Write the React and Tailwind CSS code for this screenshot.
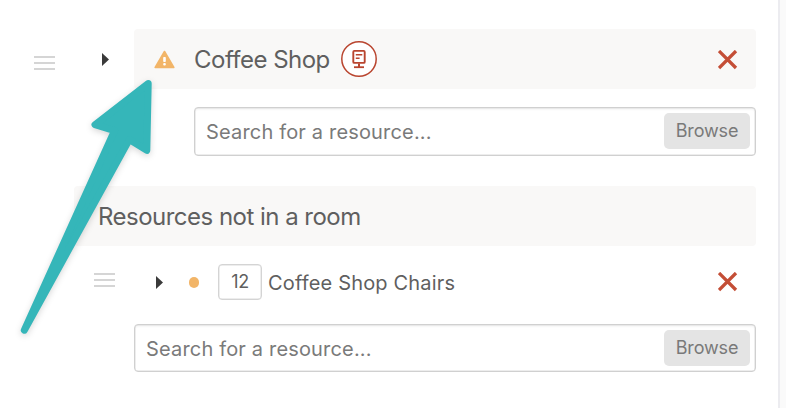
function DragHandle({ className = '' }) {
    return (
        <div className={`flex w-[21px] shrink-0 flex-col gap-1 ${className}`}>
            <span className="h-0.5 bg-[#d5d5d5]" />
            <span className="h-0.5 bg-[#d5d5d5]" />
            <span className="h-0.5 bg-[#d5d5d5]" />
        </div>
    );
}

function Caret({ className = '' }) {
    return (
        <svg className={`h-[13px] w-[7px] shrink-0 ${className}`} viewBox="0 0 7 13" fill="#3a3a3a">
            <path d="M0 0 L7 6.5 L0 13 Z" />
        </svg>
    );
}

function WarningIcon() {
    return (
        <svg className="h-[19px] w-[21px] shrink-0" viewBox="0 0 21 19">
            <path d="M10.5 1.5 L19.8 17.5 H1.2 Z" fill="#f2b568" stroke="#f2b568" strokeWidth="1.6" strokeLinejoin="round" />
            <rect x="9.2" y="7" width="2.6" height="5" rx="0.8" fill="#fff" />
            <rect x="9.2" y="13" width="2.6" height="2.6" rx="1" fill="#fff" />
        </svg>
    );
}

function SignBadge() {
    return (
        <svg className="ml-[11px] size-9 shrink-0" viewBox="0 0 36 36" fill="none" stroke="#b9452f">
            <circle cx="18" cy="18" r="17.2" fill="#fff" strokeWidth="1.5" />
            <rect x="12.3" y="9.9" width="11.4" height="12" rx="1" strokeWidth="1.9" />
            <path d="M14.8 13.7 H21.3 M14.8 17.2 H18.6" strokeWidth="1.4" />
            <path d="M18 22.5 V26" strokeWidth="2" />
            <path d="M13 26.2 H23" strokeWidth="1.8" />
        </svg>
    );
}

function RemoveButton({ className = '' }) {
    return (
        <button className={`mr-[18px] ml-auto ${className}`}>
            <svg className="size-5" viewBox="0 0 20 20" fill="none" stroke="#c44e36" strokeWidth="3.3">
                <path d="M1 1 L18 18 M18 1 L1 18" />
            </svg>
        </button>
    );
}

function ResourceSearch({ className = '' }) {
    return (
        <div className={`flex items-center rounded-[4px] border border-[#d0d0d0] bg-white pr-[5px] pl-[11px] shadow-[inset_0_0_0_0.5px_#dcdcdc,inset_0_2px_2px_rgba(0,0,0,0.04)] ${className}`}>
            <span className="flex-1 pt-0.5 text-[20px] tracking-[0.17px] text-[#7a7a7a]">Search for a resource...</span>
            <button className="h-9 w-[86px] rounded-[5px] bg-[#e4e4e4] pb-0.5 text-[18px] tracking-[-0.15px] text-[#797979]">Browse</button>
        </div>
    );
}

function PointerArrow() {
    return (
        <svg
            className="pointer-events-none absolute top-0 left-0 h-[408px] w-[200px] drop-shadow-[0_2px_3px_rgba(0,0,0,0.16)]"
            viewBox="0 0 200 408"
        >
            <path
                d="M148.2 83.5 L95 124.7 L114.5 130.6 L24.3 330.2 L129.3 139.6 L146.8 150.3 Z"
                fill="#35b6b9"
                stroke="#35b6b9"
                strokeWidth="7"
                strokeLinejoin="round"
            />
        </svg>
    );
}

export default function App() {
    return (
        <div className="relative flex h-[408px] w-[786px] overflow-hidden bg-[#fafafa] font-['Inter',sans-serif] text-[#5f5f5f]">
            <div className="w-[780px] shrink-0 border-r-2 border-[#ececf0] bg-white pt-[29px] pr-[22px]">
                <div className="flex h-[60px] items-center pl-[34px]">
                    <DragHandle className="mt-2" />
                    <Caret className="ml-[47px]" />
                    <div className="ml-[25px] flex h-full flex-1 items-center rounded-[4px] bg-[#f9f8f7] pl-5">
                        <WarningIcon />
                        <span className="ml-[19px] pt-0.5 text-[24px] tracking-[-0.52px]">Coffee Shop</span>
                        <SignBadge />
                        <RemoveButton className="mt-0.5" />
                    </div>
                </div>
                <ResourceSearch className="mt-[18px] ml-[194px] h-[49px] pb-px" />

                <div className="mt-[30px] ml-[74px] flex h-[60px] items-center rounded-[4px] bg-[#f9f8f7] pl-6">
                    <h2 className="pt-0.5 text-[24px] tracking-[-0.52px]">Resources not in a room</h2>
                </div>
                <div className="mt-[18px] flex h-9 items-center pl-[94px]">
                    <DragHandle className="-mt-1" />
                    <Caret className="ml-[41px]" />
                    <span className="ml-[26px] h-[11px] w-[10px] rounded-full bg-[#f2b568]" />
                    <span className="ml-[19px] flex h-9 w-11 items-center justify-center rounded-[4px] border border-[#d4d4d4] pb-px text-[18px] tracking-[-0.3px] shadow-[inset_0_0_0_0.5px_#dcdcdc]">12</span>
                    <span className="ml-1.5 pt-0.5 text-[20px] tracking-[0.17px]">Coffee Shop Chairs</span>
                    <RemoveButton />
                </div>
                <ResourceSearch className="mt-6 ml-[134px] h-12" />
            </div>
            <PointerArrow />
        </div>
    );
}
